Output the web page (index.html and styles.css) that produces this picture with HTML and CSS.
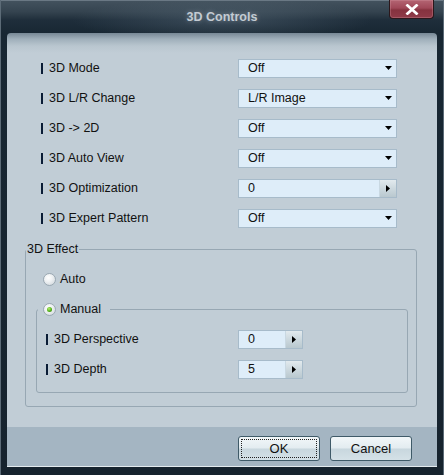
FILE: index.html
```html
<!DOCTYPE html>
<html>
<head>
<meta charset="utf-8">
<title>3D Controls</title>
<link rel="stylesheet" href="styles.css">
</head>
<body>
<div class="window">
  <div class="titlebar">3D Controls</div>
  <div class="close">
    <svg width="14" height="11" viewBox="0 0 14 11"><path d="M2.5 1.5 L11.5 9.5 M11.5 1.5 L2.5 9.5" stroke="#fff" stroke-width="2.8" stroke-linecap="square"/></svg>
  </div>
  <div class="content">
    <div class="main">
      <div class="row"><span class="label">3D Mode</span><div class="select"><span>Off</span><svg class="caret" width="7" height="4" viewBox="0 0 7 4"><path d="M0 0H7L3.5 4Z" fill="#000"/></svg></div></div>
      <div class="row"><span class="label">3D L/R Change</span><div class="select"><span>L/R Image</span><svg class="caret" width="7" height="4" viewBox="0 0 7 4"><path d="M0 0H7L3.5 4Z" fill="#000"/></svg></div></div>
      <div class="row"><span class="label">3D -&gt; 2D</span><div class="select"><span>Off</span><svg class="caret" width="7" height="4" viewBox="0 0 7 4"><path d="M0 0H7L3.5 4Z" fill="#000"/></svg></div></div>
      <div class="row"><span class="label">3D Auto View</span><div class="select"><span>Off</span><svg class="caret" width="7" height="4" viewBox="0 0 7 4"><path d="M0 0H7L3.5 4Z" fill="#000"/></svg></div></div>
      <div class="row"><span class="label">3D Optimization</span><div class="spin wide"><span class="val">0</span><span class="sbtn"><svg width="4" height="7" viewBox="0 0 4 7"><path d="M0 0V7L4 3.5Z" fill="#000"/></svg></span></div></div>
      <div class="row"><span class="label">3D Expert Pattern</span><div class="select"><span>Off</span><svg class="caret" width="7" height="4" viewBox="0 0 7 4"><path d="M0 0H7L3.5 4Z" fill="#000"/></svg></div></div>

      <fieldset class="group">
        <legend>3D Effect</legend>
        <div class="radio-row"><span class="radio"></span><span class="rtext">Auto</span></div>
        <fieldset class="inner">
          <legend><span class="lg"><span class="radio on"></span><span class="rtext">Manual</span></span></legend>
          <div class="row irow first"><span class="label">3D Perspective</span><div class="spin small"><span class="val">0</span><span class="sbtn"><svg width="4" height="7" viewBox="0 0 4 7"><path d="M0 0V7L4 3.5Z" fill="#000"/></svg></span></div></div>
          <div class="row irow"><span class="label">3D Depth</span><div class="spin small"><span class="val">5</span><span class="sbtn"><svg width="4" height="7" viewBox="0 0 4 7"><path d="M0 0V7L4 3.5Z" fill="#000"/></svg></span></div></div>
        </fieldset>
      </fieldset>
    </div>
    <div class="footer">
      <button class="btn focus">OK</button>
      <button class="btn">Cancel</button>
    </div>
  </div>
</div>
</body>
</html>
```
FILE: styles.css
```css
* { box-sizing: border-box; }
html, body { margin: 0; padding: 0; }
body {
  width: 444px;
  height: 475px;
  overflow: hidden;
  background: #131f29;
  font-family: "Liberation Sans", Arial, sans-serif;
}
.window {
  position: relative;
  width: 444px;
  height: 475px;
  display: flex;
  flex-direction: column;
  background:
    radial-gradient(ellipse 150px 22px at 50% 20px, rgba(110,130,146,0.35), rgba(110,130,146,0) 100%),
    linear-gradient(180deg, #44535f 0px, #34434f 12px, #1f2e3b 20px, #182733 33px, #16232e 100%);
  box-shadow: inset 1px 0 0 #5c6b77, inset -1px 0 0 #5c6b77, inset 0 1px 0 #6a7884;
}
.titlebar {
  height: 33px;
  display: flex;
  align-items: center;
  justify-content: center;
  font-size: 12.5px;
  font-weight: bold;
  color: #c3cbd3;
  text-shadow: 0 0 5px rgba(190,205,215,0.45);
}
.close {
  position: absolute;
  top: 0;
  left: 389px;
  width: 45px;
  height: 19px;
  border: 1px solid #2b171b;
  border-top: none;
  border-radius: 0 0 4px 4px;
  background: linear-gradient(180deg, #b46573 0px, #a04858 8px, #86323f 10px, #8f3a48 18px);
  display: flex;
  align-items: center;
  justify-content: center;
  box-shadow: inset 0 0 0 1px rgba(220,160,170,0.3);
}
.content {
  margin: 0 7px;
  height: 434px;
  border-radius: 4px 4px 0 0;
  background: linear-gradient(180deg, #778895 0px, #9fafba 6px, #b9c6cf 13px, #c1cdd6 20px);
  display: flex;
  flex-direction: column;
}
.main {
  flex: 1;
  padding: 20px 20px 0 18px;
}
.row {
  display: flex;
  align-items: center;
  height: 30px;
  padding-left: 16px;
}
.label {
  width: 197px;
  display: flex;
  align-items: center;
  font-size: 12.5px;
  color: #111;
}
.label::before {
  content: "";
  width: 2px;
  height: 11px;
  background: #0a1c36;
  margin-right: 6px;
}
.select {
  width: 159px;
  height: 19px;
  border: 1px solid #a7bbca;
  background: #deedf9;
  display: flex;
  align-items: center;
  justify-content: space-between;
  padding: 0 4px 0 9px;
  font-size: 12.5px;
  color: #111;
}
.spin {
  height: 19px;
  border: 1px solid #a7bbca;
  background: #deedf9;
  display: flex;
  font-size: 12.5px;
  color: #111;
}
.spin.wide { width: 159px; }
.spin.small { width: 65px; }
.spin .val {
  flex: 1;
  padding-left: 9px;
  line-height: 17px;
}
.sbtn {
  width: 17px;
  display: flex;
  align-items: center;
  justify-content: center;
  border-left: 1px solid #c9d8e2;
  background: linear-gradient(180deg, #e2eaee 0%, #ccd8de 50%, #b9c8cf 100%);
}
.group {
  margin: 9px 0 0 0;
  padding: 0 0 13px 0;
  border: 1px solid #97a7b3;
  border-radius: 3px;
  min-width: 0;
}
.group > legend {
  padding: 0 1px;
  margin: 0;
  font-size: 12.5px;
  line-height: 14px;
  color: #111;
}
.radio-row {
  margin-top: 8px;
  height: 30px;
  padding-left: 17px;
  display: flex;
  align-items: center;
}
.radio {
  width: 13px;
  height: 13px;
  border-radius: 50%;
  border: 1px solid #9aa8b2;
  background: radial-gradient(circle at 40% 35%, #ffffff 0%, #eef1f3 40%, #c9d1d7 100%);
  display: inline-flex;
  align-items: center;
  justify-content: center;
  flex: none;
}
.radio.on::after {
  content: "";
  width: 5px;
  height: 5px;
  border-radius: 50%;
  background: radial-gradient(circle at 40% 35%, #b8f070 0%, #52b01a 55%, #2f7a0a 100%);
}
.rtext {
  margin-left: 4px;
  font-size: 12.5px;
  color: #111;
}
.inner {
  margin: 8px 8px 0 10px;
  padding: 0 0 8px 0;
  border: 1px solid #97a7b3;
  border-radius: 3px;
  min-width: 0;
}
.inner > legend {
  margin: 0 0 0 1px;
  padding: 0 9px 0 5px;
  line-height: 14px;
}
.lg {
  display: inline-flex;
  align-items: center;
  height: 14px;
  vertical-align: top;
}
.irow { padding-left: 9px; }
.irow.first { margin-top: 8px; }
.irow .label { width: 192px; }
.footer {
  height: 40px;
  background: #a4b5c2;
  border-bottom: 1px solid #e4ebef;
  display: flex;
  justify-content: flex-end;
  align-items: flex-start;
  gap: 10px;
  padding: 9px 25px 0 0;
}
.btn {
  position: relative;
  width: 82px;
  height: 25px;
  margin: 0;
  padding: 0;
  border: 1px solid #3f5a68;
  border-radius: 3px;
  background: linear-gradient(180deg, #f2f7f9 0%, #e3ecf0 48%, #c8d7de 52%, #d4e1e7 100%);
  font-family: "Liberation Sans", Arial, sans-serif;
  font-size: 13px;
  color: #111;
}
.btn.focus::after {
  content: "";
  position: absolute;
  inset: 2px;
  border: 1px dotted #222;
}
```
